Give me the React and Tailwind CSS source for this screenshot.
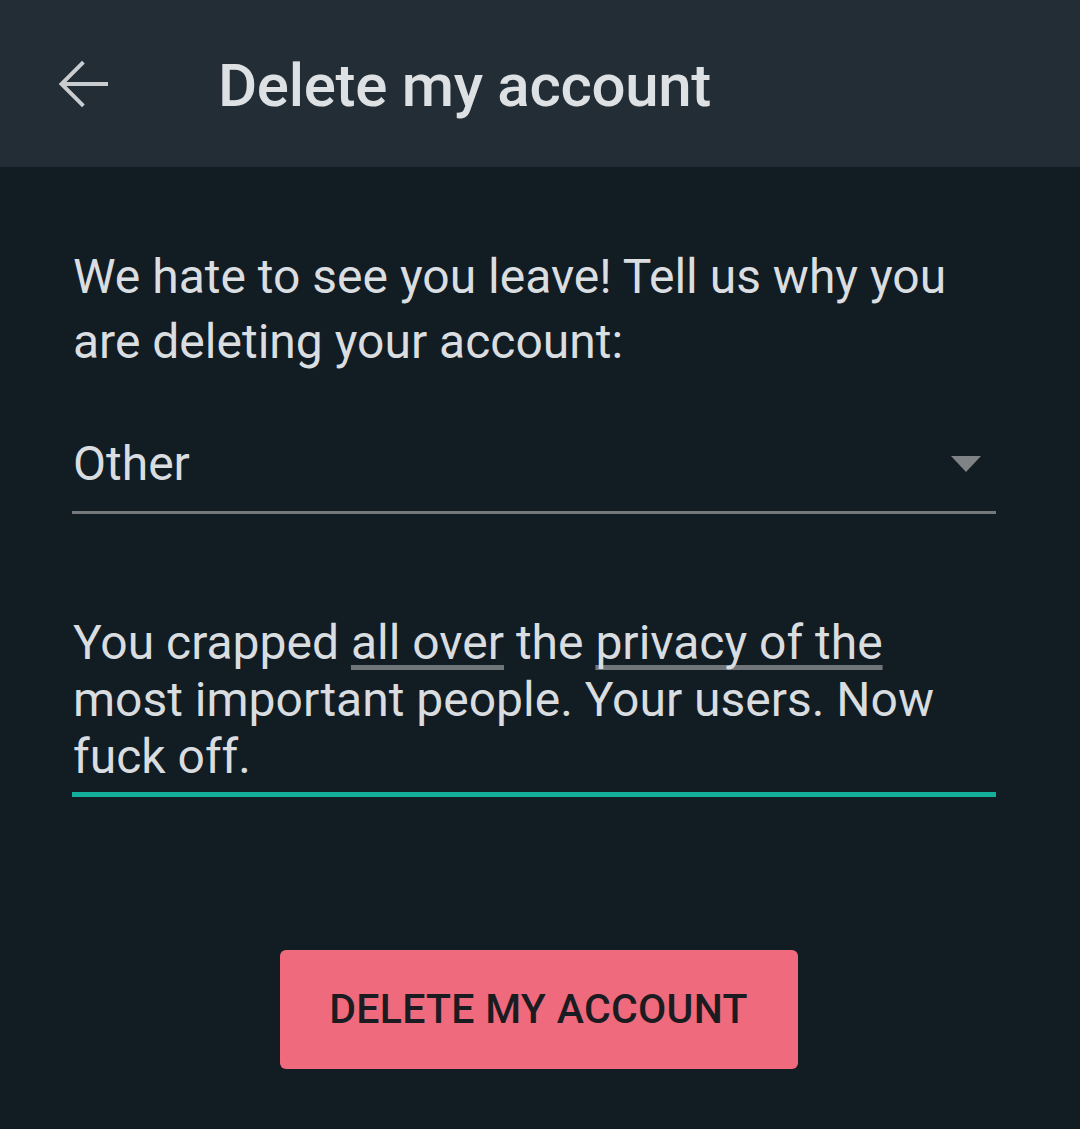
export default function App() {
  return (
    <div
      className="w-[1080px] h-[1129px] bg-[#121c23] text-[#d9dde0] overflow-hidden"
      style={{ fontFamily: "Roboto, 'Noto Sans', sans-serif" }}
    >
      {/* --- Top bar --- */}
      <div className="h-[167px] bg-[#232d36] flex items-center">
        <div className="w-[218px] pl-[48px] flex items-center">
          <svg width="72" height="72" viewBox="0 0 24 24" fill="none" stroke="#c9cdd0" strokeWidth="1.3">
            <path d="M20 12H4.5" />
            <path d="M11.8 4.7L4.5 12l7.3 7.3" />
          </svg>
        </div>
        <h1 className="text-[60px] font-medium text-[#dde1e4] leading-none tracking-[-0.3px] pt-[4px]">
          Delete my account
        </h1>
      </div>

      {/* --- Body --- */}
      <div className="px-[73px] pt-[77px]">
        <p className="text-[48px] leading-[65px] text-[#dadee1]">
          We hate to see you leave! Tell us why you are deleting your account:
        </p>

        <div className="mt-[60px] mr-[11px] -ml-px border-b-[3px] border-[#75797c] flex items-center justify-between pb-[17px] pl-px">
          <span className="text-[48px] leading-[60px]">Other</span>
          <svg width="30" height="16" viewBox="0 0 30 16" className="mr-[15px]">
            <polygon points="0,0 30,0 15,16" fill="#808385" />
          </svg>
        </div>

        <div className="mt-[100px] mr-[11px] -ml-px border-b-[5px] border-[#14ae9c] pl-px pb-[7px]">
          <p className="text-[48px] leading-[57px]">
            You crapped{" "}
            <span className="underline decoration-[#6f7579] decoration-[5px] underline-offset-[6px] [text-decoration-skip-ink:none]">all over</span>{" "}
            the{" "}
            <span className="underline decoration-[#6f7579] decoration-[5px] underline-offset-[6px] [text-decoration-skip-ink:none]">privacy of the</span>{" "}
            most important people. Your users. Now fuck off.
          </p>
        </div>

        <div className="flex justify-center mt-[153px] pr-[3px]">
          <button className="w-[518px] h-[119px] rounded-[6px] bg-[#ef6a7c] text-[#1b1b22] text-[41px] font-medium tracking-[0.3px]">
            DELETE MY ACCOUNT
          </button>
        </div>
      </div>
    </div>
  );
}
